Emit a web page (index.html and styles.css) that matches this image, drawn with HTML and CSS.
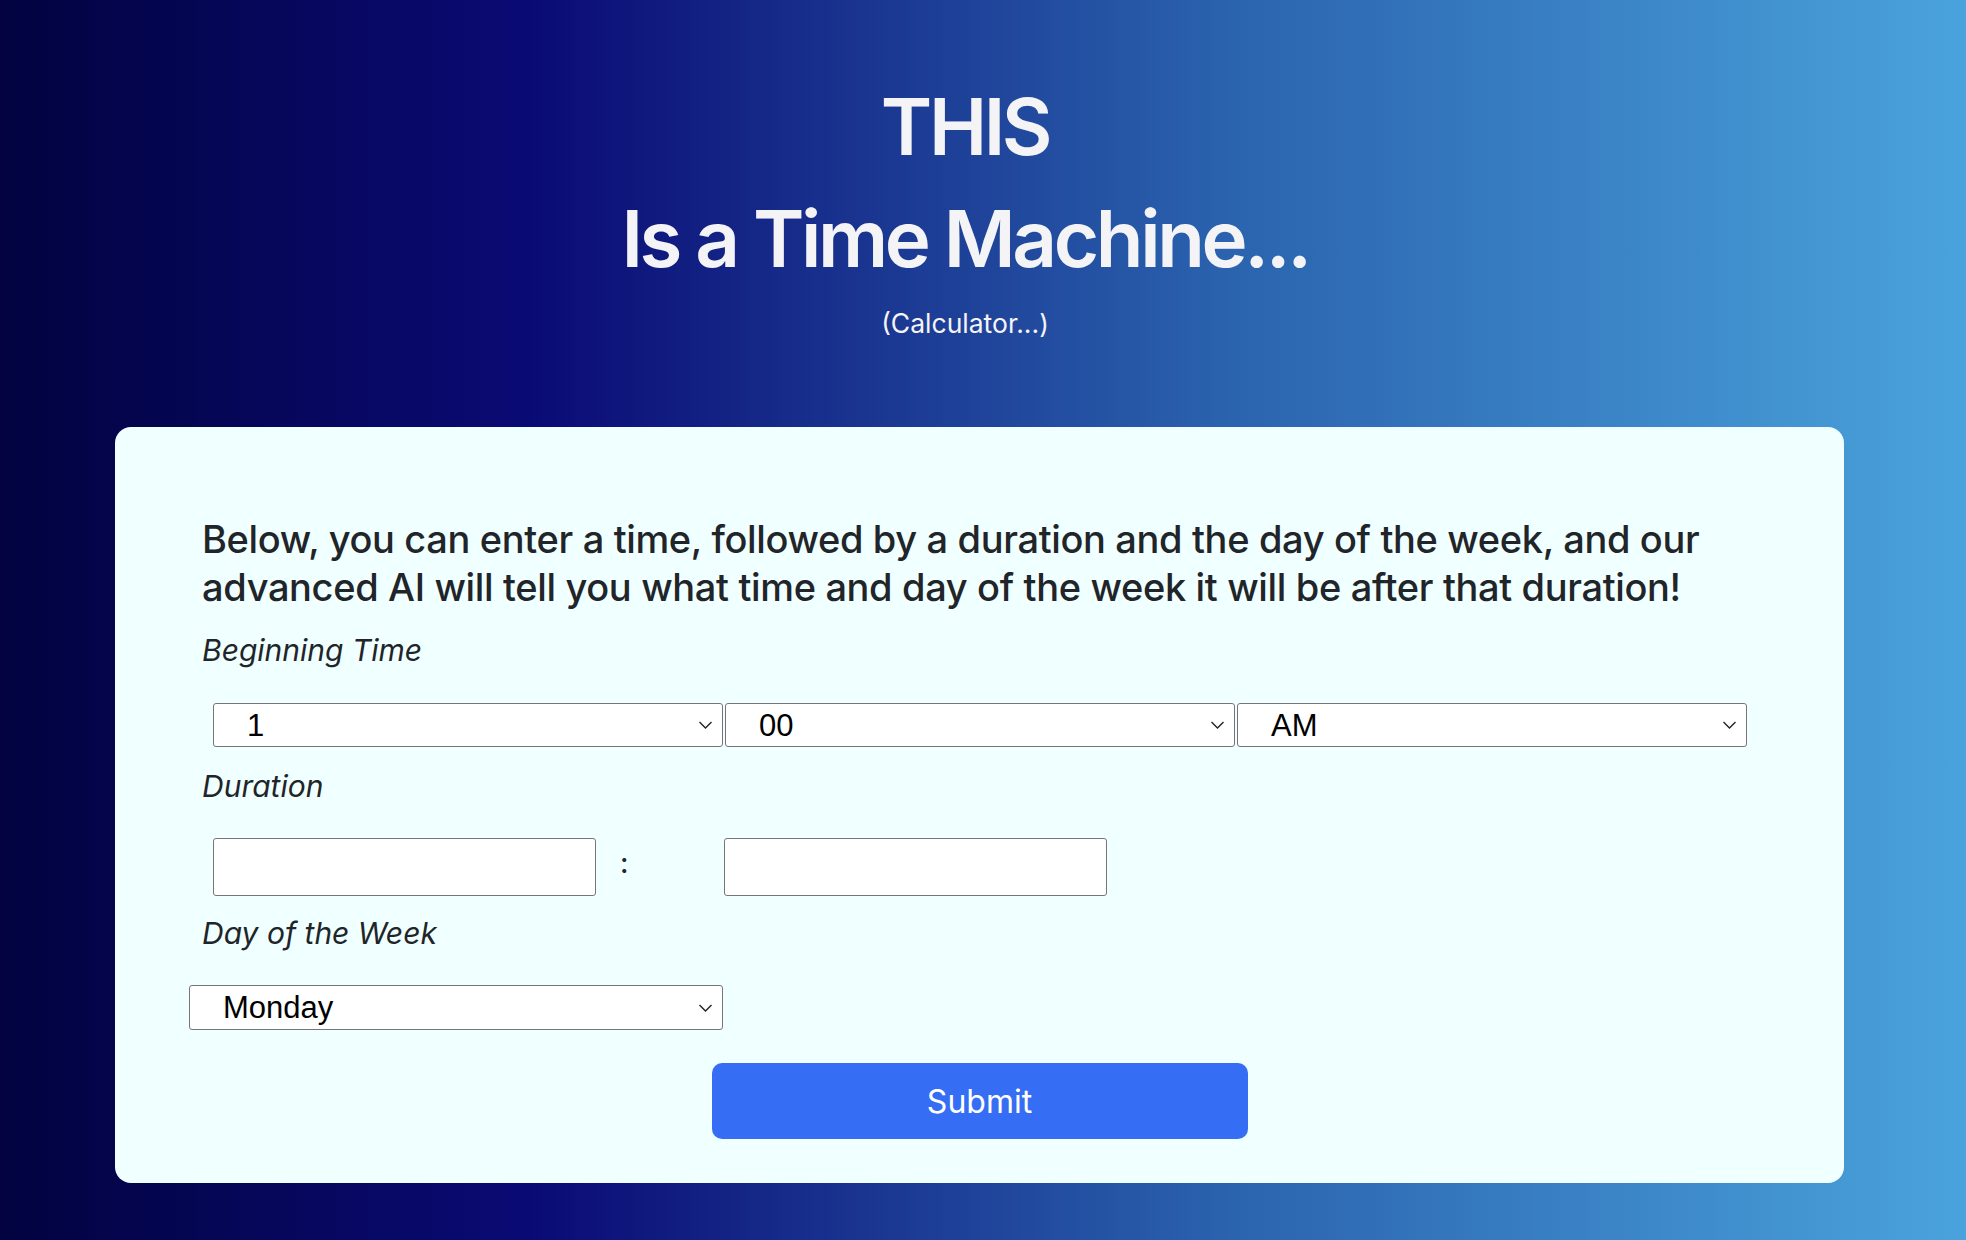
FILE: index.html
```html
<!DOCTYPE html>
<html lang="en">
<head>
<meta charset="utf-8">
<title>Time Machine</title>
<link rel="stylesheet" href="styles.css">
</head>
<body>
<header class="hero">
  <h1 class="hero-title"><span class="hero-line">THIS</span><span class="hero-line">Is a Time Machine...</span></h1>
  <p class="hero-sub">(Calculator...)</p>
</header>
<main class="card">
  <p class="intro">Below, you can enter a time, followed by a duration and the day of the week, and our advanced AI will tell you what time and day of the week it will be after that duration!</p>
  <p class="label">Beginning Time</p>
  <div class="select-row">
    <span class="select-wrap">
      <select class="field-select"><option>1</option><option>2</option><option>3</option></select>
      <svg class="chev" viewBox="0 0 14 8" aria-hidden="true"><path d="M1 1 L7 7 L13 1"/></svg>
    </span>
    <span class="select-wrap">
      <select class="field-select"><option>00</option><option>15</option><option>30</option></select>
      <svg class="chev" viewBox="0 0 14 8" aria-hidden="true"><path d="M1 1 L7 7 L13 1"/></svg>
    </span>
    <span class="select-wrap">
      <select class="field-select"><option>AM</option><option>PM</option></select>
      <svg class="chev" viewBox="0 0 14 8" aria-hidden="true"><path d="M1 1 L7 7 L13 1"/></svg>
    </span>
  </div>
  <p class="label">Duration</p>
  <div class="duration-row">
    <input class="field-input" type="text">
    <span class="colon">:</span>
    <input class="field-input" type="text">
  </div>
  <p class="label label-day">Day of the Week</p>
  <div class="day-row">
    <span class="select-wrap day-wrap">
      <select class="field-select"><option>Monday</option><option>Tuesday</option><option>Wednesday</option><option>Thursday</option><option>Friday</option><option>Saturday</option><option>Sunday</option></select>
      <svg class="chev" viewBox="0 0 14 8" aria-hidden="true"><path d="M1 1 L7 7 L13 1"/></svg>
    </span>
  </div>
  <div class="submit-row">
    <button class="submit" type="button">Submit</button>
  </div>
</main>
</body>
</html>
```
FILE: styles.css
```css
html, body {
  margin: 0;
  padding: 0;
}

body {
  min-height: 1240px;
  font-family: "Inter", "Noto Sans", sans-serif;
  color: #212529;
  background: linear-gradient(90deg, #020340 0%, #0a0a74 27%, #2a62ae 62%, #4aa3dc 100%);
  overflow: hidden;
}

.hero {
  padding: 71px 36px 0 0;
  text-align: center;
  color: #f4f4f6;
}

.hero-title {
  margin: 0;
  font-size: 78px;
  font-weight: 600;
  letter-spacing: -3.4px;
}

.hero-line {
  display: block;
  line-height: 112px;
}

.hero-sub {
  margin: 13px 0 0;
  font-size: 26.5px;
  line-height: 30px;
  font-weight: 400;
  letter-spacing: 0;
}

.card {
  margin: 89px 0 0 115px;
  width: 1729px;
  box-sizing: border-box;
  padding: 89px 87px 44px;
  background: #f0ffff;
  border-radius: 16px;
}

.intro {
  margin: 0;
  font-size: 38px;
  line-height: 47.6px;
  font-weight: 500;
  letter-spacing: -0.35px;
}

.label {
  margin: 21px 0 0;
  font-size: 30px;
  line-height: 36px;
  font-style: italic;
  font-weight: 400;
}

.label-day {
  margin-top: 19px;
}

.select-row {
  display: flex;
  gap: 2px;
  margin-top: 35px;
  padding-left: 11px;
}

.select-wrap {
  position: relative;
  display: block;
  width: 510px;
  height: 44px;
}

.field-select {
  appearance: none;
  -webkit-appearance: none;
  display: block;
  width: 100%;
  height: 100%;
  box-sizing: border-box;
  margin: 0;
  padding: 0 40px 0 33px;
  border: 1px solid #767676;
  border-radius: 3px;
  background: #ffffff;
  color: #000000;
  font-family: "Liberation Sans", Arial, sans-serif;
  font-size: 31px;
}

.chev {
  position: absolute;
  right: 10px;
  top: 18px;
  width: 15px;
  height: 8px;
  fill: none;
  stroke: #222222;
  stroke-width: 1.4;
  pointer-events: none;
}

.duration-row {
  display: flex;
  align-items: center;
  margin-top: 34px;
  padding-left: 11px;
}

.field-input {
  display: block;
  width: 383px;
  height: 58px;
  box-sizing: border-box;
  margin: 0;
  padding: 0 10px;
  border: 1px solid #767676;
  border-radius: 3px;
  background: #ffffff;
  font-family: "Liberation Sans", Arial, sans-serif;
  font-size: 28px;
}

.colon {
  width: 104px;
  margin: 0 0 8px 24px;
  font-size: 28px;
  line-height: 50px;
  font-weight: 500;
}

.day-row {
  display: flex;
  margin-top: 34px;
  margin-left: -13px;
}

.day-wrap {
  width: 534px;
  height: 45px;
}

.day-wrap .chev {
  top: 19px;
}

.submit-row {
  display: flex;
  justify-content: center;
  margin-top: 33px;
}

.submit {
  width: 536px;
  height: 76px;
  border: none;
  border-radius: 10px;
  background: #356ef5;
  color: #ffffff;
  font-family: "Inter", "Noto Sans", sans-serif;
  font-size: 32px;
  font-weight: 400;
}
```
